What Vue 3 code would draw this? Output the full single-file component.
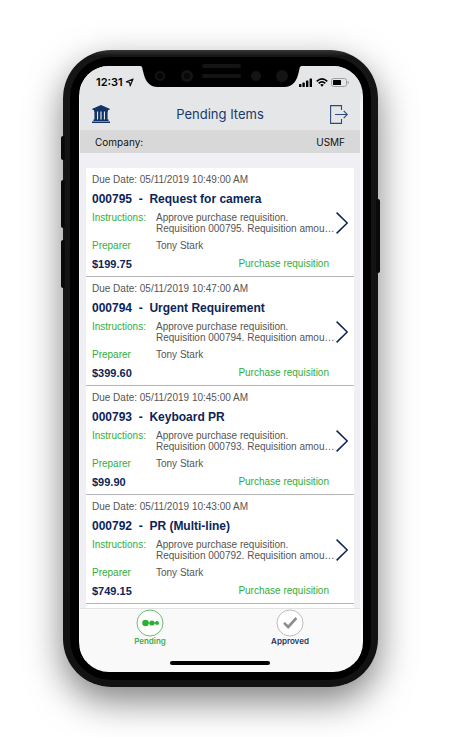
<script setup>
import { ref } from 'vue'

const activeTab = ref('pending')

const items = ref([
  { id: '000795', title: 'Request for camera', due: '05/11/2019 10:49:00 AM', amount: '199.75' },
  { id: '000794', title: 'Urgent Requirement', due: '05/11/2019 10:47:00 AM', amount: '399.60' },
  { id: '000793', title: 'Keyboard PR', due: '05/11/2019 10:45:00 AM', amount: '99.90' },
  { id: '000792', title: 'PR (Multi-line)', due: '05/11/2019 10:43:00 AM', amount: '749.15' }
])
</script>

<template>
  <div class="phone">
    <span class="side-key mute"></span>
    <span class="side-key vol-up"></span>
    <span class="side-key vol-down"></span>
    <span class="side-key power"></span>

    <div class="bezel">
      <svg class="notch" viewBox="0 0 164 24" width="164" height="24">
        <path d="M0 0H164V3C160 3 161 5 160 8C158 18 154 24 145 24H19C10 24 6 18 4 8C3 5 4 3 0 3Z" fill="#000" />
        <g fill="#141414">
          <circle cx="21" cy="13" r="5" />
          <circle cx="48" cy="13" r="6" />
          <rect x="63" y="1" width="39" height="4" rx="2" />
          <rect x="63" y="11" width="39" height="4" rx="2" />
          <circle cx="117" cy="13" r="5" />
          <circle cx="143" cy="13" r="6" />
        </g>
        <circle cx="21" cy="13" r="3" fill="#050505" />
        <circle cx="48" cy="13" r="3" fill="#080808" />
      </svg>

      <div class="screen">
        <header class="top">
          <div class="status-bar">
            <div class="status-left">
              <span>12:31</span>
              <svg viewBox="0 0 9 9" width="9" height="9">
                <path d="M8 1L1.4 3.8L4.6 4.4L5.2 7.8Z" fill="none" stroke="#111" stroke-width="1.2" stroke-linejoin="round" />
              </svg>
            </div>
            <div class="status-right">
              <svg viewBox="0 0 14 9" width="14" height="9" fill="#000">
                <rect x="0" y="6" width="2.4" height="3" rx=".6" />
                <rect x="3.4" y="4.6" width="2.4" height="4.4" rx=".6" />
                <rect x="7" y="2.6" width="2.4" height="6.4" rx=".6" />
                <rect x="10.6" y=".4" width="2.4" height="8.6" rx=".6" />
              </svg>
              <svg viewBox="0 0 12 9" width="12" height="9">
                <g fill="none" stroke="#000" stroke-width="1.6">
                  <path d="M.7 3.3Q6 -1.4 11.3 3.3" />
                  <path d="M2.7 5.3Q6 2.4 9.3 5.3" />
                </g>
                <path d="M4.2 6.8Q6 5.4 7.8 6.8L6 8.7Z" />
              </svg>
              <svg viewBox="0 0 18 9" width="18" height="9">
                <rect x=".5" y=".5" width="15" height="8" rx="2" fill="none" stroke="#a0a0a2" />
                <rect x="2" y="2" width="8" height="5" rx=".6" />
                <path d="M16.6 3V6Q17.8 5.6 17.8 4.5T16.6 3Z" fill="#999" />
              </svg>
            </div>
          </div>

          <div class="nav-bar">
            <button type="button" class="icon-btn" aria-label="Company">
              <svg viewBox="0 0 18 18" width="18" height="18" fill="#133468">
                <path d="M9 0L17.6 3.8V5H.4V3.8Z" />
                <path d="M2 5H16V6.6H2Z" />
                <path d="M2.4 6H5V15H2.4ZM6.1 6H8.4V15H6.1ZM9.6 6H11.9V15H9.6ZM13 6H15.6V15H13Z" />
                <path d="M1.4 14.4H16.6V16H1.4ZM0 16.4H18V18H0Z" />
              </svg>
            </button>
            <h1>Pending Items</h1>
            <button type="button" class="icon-btn" aria-label="Log out">
              <svg viewBox="0 0 18 19" width="18" height="19" fill="none" stroke="#2c4a7c" stroke-width="1.1">
                <path d="M11.5 5V.6H.6V18.4H11.5V14" />
                <path d="M5 9.5H17.3M13.7 5.9L17.3 9.5L13.7 13.1" />
              </svg>
            </button>
          </div>
        </header>

        <div class="company-bar">
          <span>Company:</span>
          <span>USMF</span>
        </div>

        <main class="list">
          <article v-for="item in items" :key="item.id" class="card">
            <div class="card-body">
              <p class="due">Due Date: {{ item.due }}</p>
              <h2>{{ item.id }}&nbsp; -&nbsp; {{ item.title }}</h2>
              <dl class="details">
                <dt>Instructions:</dt>
                <dd>
                  <span>Approve purchase requisition.</span>
                  <span>Requisition {{ item.id }}. Requisition amou…</span>
                </dd>
                <dt>Preparer</dt>
                <dd>Tony Stark</dd>
              </dl>
              <div class="card-footer">
                <strong>${{ item.amount }}</strong>
                <span>Purchase requisition</span>
              </div>
            </div>
            <button type="button" class="icon-btn" :aria-label="'Open ' + item.id">
              <svg viewBox="0 0 12 22" width="12" height="22">
                <path d="M.6 .6L11.2 11L.6 21.4" fill="none" stroke="#0c2358" stroke-width="1.5" />
              </svg>
            </button>
          </article>
        </main>

        <nav class="tab-bar">
          <button type="button" class="tab tab-pending" @click="activeTab = 'pending'">
            <svg viewBox="0 0 28 28" width="28" height="28">
              <circle cx="14" cy="14" r="13" fill="#fff" stroke="#6cbd70" />
              <g fill="#2cb034">
                <path d="M9 13.4H21V14.6H9Z" />
                <circle cx="9.5" cy="14" r="3.3" />
                <circle cx="16" cy="14" r="2.6" />
                <circle cx="21" cy="14" r="2" />
              </g>
            </svg>
            <span>Pending</span>
          </button>
          <button type="button" class="tab tab-approved" @click="activeTab = 'approved'">
            <svg viewBox="0 0 28 28" width="28" height="28">
              <circle cx="14" cy="14" r="13" fill="#fff" stroke="#bdbdbd" />
              <path d="M8 13.8L12.2 18L20.4 9" fill="none" stroke="#8e8e8e" stroke-width="2.6" />
            </svg>
            <span>Approved</span>
          </button>
        </nav>
        <div class="home-indicator"></div>
      </div>
    </div>
  </div>
</template>

<style>
body {
  margin: 0;
  background: #fff;
}

#app {
  display: flow-root;
}
</style>

<style scoped>
.phone {
  position: relative;
  margin: 50px 78px 50px 63px;
  padding: 7px;
  border-radius: 48px;
  background: linear-gradient(#353837, #151515 6px, #121212);
  box-shadow: 0 14px 36px rgba(0, 0, 0, 0.5);
  font-family: "Liberation Sans", Arial, sans-serif;
}

.side-key {
  position: absolute;
  left: -2px;
  width: 4px;
  border-radius: 2px;
  background: #0a0a0a;
}

.mute {
  top: 86px;
  height: 24px;
}

.vol-up {
  top: 130px;
  height: 48px;
}

.vol-down {
  top: 190px;
  height: 48px;
}

.power {
  left: auto;
  right: -2px;
  top: 149px;
  height: 74px;
}

.bezel {
  position: relative;
  padding: 9px 8px 8px 9px;
  border-radius: 41px;
  background: #000;
}

.notch {
  position: absolute;
  top: 6px;
  left: 50%;
  transform: translateX(-50%);
}

.screen {
  overflow: hidden;
  padding: 0 3px 0 1px;
  border-radius: 30px;
  background: linear-gradient(#e5e6e8 24px, #f6f6fa 40px, #f6f6fa 520px, #f9f9f9 560px);
}

.top {
  background: #e5e6e8;
}

.status-bar {
  display: flex;
  align-items: center;
  justify-content: space-between;
  height: 32px;
  padding: 0 11px 0 16px;
}

.status-left,
.status-right {
  display: flex;
  align-items: center;
}

.status-left {
  gap: 2px;
  font: 600 11px "Inter", sans-serif;
  color: #000;
}

.status-right {
  gap: 3px;
}

.nav-bar {
  display: flex;
  align-items: center;
  justify-content: space-between;
  height: 32px;
  padding: 0 12px;
}

h1 {
  margin: 0;
  font: 400 13px "Inter", sans-serif;
  color: #173a70;
}

.icon-btn {
  display: flex;
  padding: 0;
  border: none;
  background: none;
  cursor: pointer;
}

.company-bar {
  display: flex;
  align-items: center;
  justify-content: space-between;
  height: 23px;
  padding: 0 15px;
  background: #d8d8d8;
  font: 400 10px "Inter", sans-serif;
  color: #111;
}

.list {
  padding: 15px 6px 0;
  background: #efeff4;
}

.list::after {
  content: "";
  display: block;
  height: 4px;
  background: #fff;
}

.card {
  display: flex;
  align-items: center;
  gap: 2px;
  padding: 6px 6px 5px;
  border-bottom: 1px solid #b4b4b6;
  background: #fff;
}

.card-body {
  flex: 1;
  min-width: 0;
}

.due {
  margin: 0;
  font-size: 10px;
  line-height: 12px;
  color: #555;
}

h2 {
  margin: 5px 0;
  font-size: 12px;
  line-height: 16px;
  color: #0b2558;
}

.details {
  display: grid;
  grid-template-columns: 64px minmax(0, 1fr);
  row-gap: 6px;
  margin: 0;
  font-size: 10px;
  line-height: 11px;
}

dt {
  color: #2fae3a;
}

dd {
  margin: 0;
  color: #555;
}

dd span {
  display: block;
  white-space: nowrap;
}

.card-footer {
  display: flex;
  align-items: center;
  justify-content: space-between;
  margin-top: 6px;
  padding-right: 5px;
  font-size: 10px;
  line-height: 14px;
  color: #2fae3a;
}

.card-footer strong {
  font-size: 11px;
  color: #0b2558;
}

.tab-bar {
  display: grid;
  grid-template-columns: 1fr 1fr;
  height: 53px;
  border-top: 1px solid #e2e2e4;
  background: #f9f9f9;
  box-sizing: border-box;
}

.tab {
  display: flex;
  flex-direction: column;
  align-items: center;
  padding: 0;
  border: none;
  background: none;
  font: 600 8px/8px "Inter", sans-serif;
  cursor: pointer;
}

.tab-pending {
  color: #3fae48;
}

.tab-approved {
  color: #1c335f;
}

.home-indicator {
  width: 100px;
  height: 4px;
  margin: 0 auto 7px;
  border-radius: 2px;
  background: #000;
}
</style>
